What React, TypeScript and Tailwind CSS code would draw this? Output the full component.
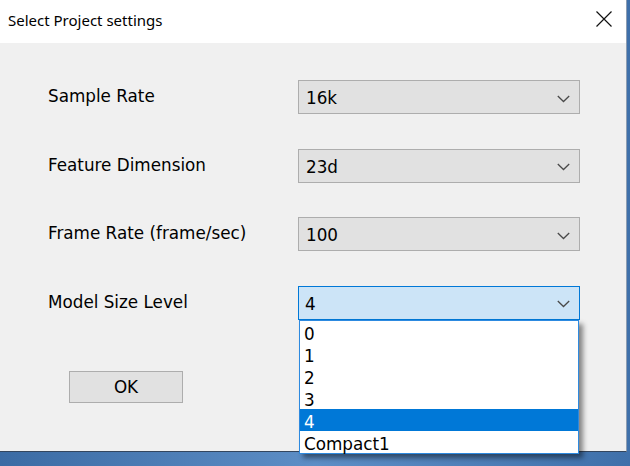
import React, { useState } from 'react';

const FONT = { fontFamily: '"DejaVu Sans", Verdana, sans-serif' };

const Chevron: React.FC = () => (
    <svg width="13" height="8" viewBox="0 0 13 8" className="shrink-0">
        <path d="M0.8 1 L6.5 6.5 L12.2 1" fill="none" stroke="#4a4a4a" strokeWidth="1.3" />
    </svg>
);

type ComboProps = { value: string; open?: boolean; options?: string[] };

const Combo: React.FC<ComboProps> = ({ value, open, options }) => (
    <div className="relative w-[282px] h-[34px]">
        <div
            className={
                open
                    ? 'h-full flex items-center justify-between pl-[6px] pr-[9px] pt-[3px] bg-[#cce4f7] border border-[#0078d7]'
                    : 'h-full flex items-center justify-between pl-[7px] pr-[9px] pt-[3px] bg-[#e1e1e1] border border-[#adadad]'
            }
        >
            <span className="text-[16.8px] text-black leading-none">{value}</span>
            <Chevron />
        </div>
        {open && options && (
            <ul className="absolute top-full left-[1px] w-[280px] bg-white border border-[#2d8ae0] shadow-[4px_4px_5px_rgba(0,0,0,0.45)] z-10">
                {options.map((opt) => (
                    <li
                        key={opt}
                        className={
                            opt === value
                                ? 'h-[22px] flex items-center pl-[4px] pt-[5px] text-[16.8px] leading-none bg-[#0078d7] text-white'
                                : 'h-[22px] flex items-center pl-[4px] pt-[5px] text-[16.8px] leading-none text-black'
                        }
                    >
                        {opt}
                    </li>
                ))}
            </ul>
        )}
    </div>
);

const rows = [
    { label: 'Sample Rate', value: '16k' },
    { label: 'Feature Dimension', value: '23d' },
    { label: 'Frame Rate (frame/sec)', value: '100' },
];

const App: React.FC = () => {
    const [level] = useState('4');

    return (
        <div className="w-[630px] h-[466px] overflow-hidden bg-gradient-to-r from-[#3b6ba4] via-[#5d8ec6] to-[#3f70aa]" style={FONT}>
            <div className="w-[627px] h-[452px] flex flex-col bg-[#f0f0f0] border-r border-b border-r-[#8d9db2] border-b-[#33465f]">
                <div className="h-[43px] shrink-0 bg-white flex items-center justify-between pl-[8px] pr-[14px]">
                    <span
                        className="text-[15px] text-black pb-[2px]"
                        style={{ fontFamily: '"Noto Sans", "Open Sans", sans-serif' }}
                    >
                        Select Project settings
                    </span>
                    <svg width="16" height="16" viewBox="0 0 16 16" className="mb-[5px]">
                        <path d="M0.5 0.5 L15.5 15.5 M15.5 0.5 L0.5 15.5" stroke="#111" strokeWidth="1.2" />
                    </svg>
                </div>

                <div className="flex flex-col pt-[37px] pl-[48px] gap-[34.6px]">
                    {rows.map((r) => (
                        <div key={r.label} className="flex items-center h-[34px]">
                            <span className="w-[250px] text-[16.8px] text-black pb-[1px]">{r.label}</span>
                            <Combo value={r.value} />
                        </div>
                    ))}
                    <div className="flex items-center h-[34px]">
                        <span className="w-[250px] text-[16.8px] text-black pb-[1px]">Model Size Level</span>
                        <Combo value={level} open options={['0', '1', '2', '3', '4', 'Compact1']} />
                    </div>
                </div>

                <div className="pl-[69px] mt-[51px]">
                    <button className="w-[114px] h-[32px] bg-[#e1e1e1] border border-[#adadad] text-[16.8px] text-black pt-[2px]">
                        OK
                    </button>
                </div>
            </div>
        </div>
    );
};

export default App;
